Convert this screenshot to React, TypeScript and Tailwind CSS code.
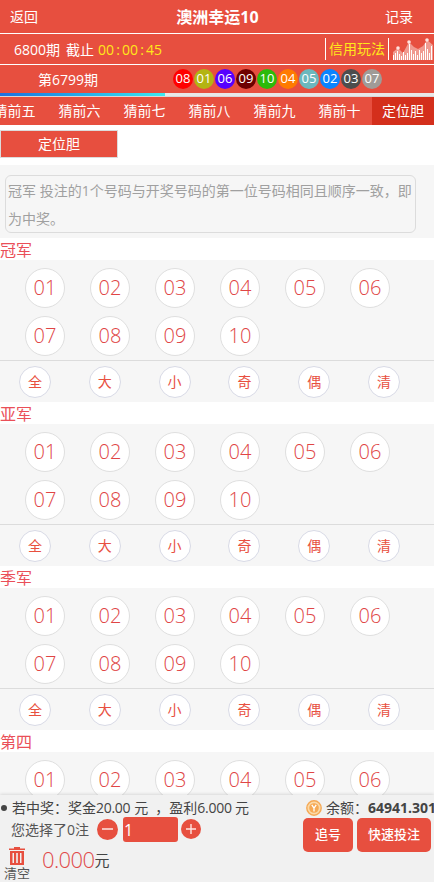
const BALLS = [
  { n: '08', c: 'bg-[#ff0000]' },
  { n: '01', c: 'bg-[#b3b412]' },
  { n: '06', c: 'bg-[#5500ff]' },
  { n: '09', c: 'bg-[#6e0000]' },
  { n: '10', c: 'bg-[#2cba0a]' },
  { n: '04', c: 'bg-[#ff7b00]' },
  { n: '05', c: 'bg-[#6cb8bd]' },
  { n: '02', c: 'bg-[#0a84ff]' },
  { n: '03', c: 'bg-[#4d4d4d]' },
  { n: '07', c: 'bg-[#a09b97]' },
];
const TABS = ['猜前五', '猜前六', '猜前七', '猜前八', '猜前九', '猜前十'];
const NUMS = ['01', '02', '03', '04', '05', '06', '07', '08', '09', '10'];
const QUICK = ['全', '大', '小', '奇', '偶', '清'];

const ChartIcon = () => (
  <svg width="41" height="22" viewBox="0 0 41 22" className="block">
    <path d="M1 22V14L6 10L11 15L17 4L22 9L26 11L31 8L35 2L41 7V22Z" fill="#f09a90" />
    {[1, 3, 5, 7, 9, 11, 13, 15, 17, 19, 21, 23, 25, 27, 29, 31, 33, 35, 37, 39].map((x, i) => (
      <rect key={x} x={x} y={[17, 15, 13, 16, 18, 14, 17, 15, 6, 12, 16, 13, 17, 12, 15, 13, 5, 11, 15, 8][i]} width="1" height="22" fill="#fff" />
    ))}
    <circle cx="6" cy="10" r="1.8" fill="#ffe3df" />
    <circle cx="17" cy="4" r="1.8" fill="#ffe3df" />
    <circle cx="35" cy="2" r="1.8" fill="#ffe3df" />
  </svg>
);

const CoinIcon = () => (
  <svg width="16" height="16" viewBox="0 0 16 16" className="block shrink-0">
    <circle cx="8" cy="8" r="7.2" fill="#fbd9a8" stroke="#f5a955" strokeWidth="1.4" />
    <circle cx="8" cy="8" r="4.8" fill="#f6a954" />
    <path d="M5.8 4.8L8 8L10.2 4.8M8 8V11.4" fill="none" stroke="#fff" strokeWidth="1.3" />
  </svg>
);

const Section = ({ title }: { title: string }) => (
  <div>
    <div className="h-[22px] leading-[24px] text-[16px] text-[#ea4f58]">{title}</div>
    <div className="bg-[#f6f6f6]">
      <div className="flex flex-wrap gap-x-[25px] gap-y-[8px] pl-[25px] pt-[8px] pb-[4px] h-[100px]">
        {NUMS.map(n => (
          <div key={n} className="w-[40px] h-[40px] rounded-full bg-white border border-[#dfdfdf] flex items-center justify-center text-[20px] font-light text-[#e04545]">{n}</div>
        ))}
      </div>
      <div className="h-[42px] border-t border-[#dcdcdc] flex items-center pl-[19px] gap-x-[37.8px]">
        {QUICK.map(q => (
          <div key={q} className="w-[32px] h-[32px] rounded-full bg-white border border-[#d8dae6] flex items-center justify-center text-[14px] text-[#e8503f]">{q}</div>
        ))}
      </div>
    </div>
  </div>
);

export default function App() {
  return (
    <div className="w-[434px] h-[882px] flex flex-col overflow-hidden bg-white font-['Open_Sans','Noto_Sans_CJK_SC',sans-serif] text-[14px]">
      {/* Header */}
      <div className="h-[33px] shrink-0 bg-[#e74f3f] text-white flex items-center justify-between pl-[10px] pr-[21px]">
        <span>返回</span>
        <span className="text-[16px] font-bold ml-[12px]">澳洲幸运10</span>
        <span>记录</span>
      </div>
      <div className="h-[31px] shrink-0 bg-[#e74f3f] border-t border-white text-white flex items-center">
        <span className="ml-[14px]">6800期</span>
        <span className="ml-[6px]">截止</span>
        <span className="ml-[4px] text-[#ffe81a] [word-spacing:-1.5px]">00 : 00 : 45</span>
        <span className="ml-[auto] h-[22px] border-l border-white pl-[3px] text-[#ffe81a] leading-[22px]">信用玩法</span>
        <div className="ml-[3px] h-[22px] border-l border-white pl-[3px] pr-[1px] flex items-end">
          <ChartIcon />
        </div>
      </div>
      <div className="h-[29px] shrink-0 bg-[#e74f3f] border-t border-white text-white flex items-center">
        <span className="ml-[38px] w-[135px]">第6799期</span>
        <div className="flex gap-x-px">
          {BALLS.map(b => (
            <span key={b.n} className={`w-[20px] h-[20px] rounded-full ${b.c} flex items-center justify-center text-[13px]`}>{b.n}</span>
          ))}
        </div>
      </div>
      {/* Progress */}
      <div className="h-[3px] shrink-0 bg-[#e8e8e8]">
        <div className="h-full w-[165px] bg-gradient-to-r from-[#1f6fe0] to-[#3fe8f0]" />
      </div>
      {/* Tabs */}
      <div className="h-[29px] shrink-0 bg-[#e74f3f] text-white flex justify-end overflow-hidden border-t border-[#d8d8d8]">
        {TABS.map(t => (
          <span key={t} className="w-[65px] shrink-0 text-center leading-[27px]">{t}</span>
        ))}
        <span className="w-[62px] shrink-0 text-center leading-[27px] bg-[#d42f1c]">定位胆</span>
      </div>

      {/* Content */}
      <div className="flex-1 min-h-0 overflow-hidden">
        <div className="pt-[5px] pb-[7px]">
          <div className="w-[118px] h-[28px] bg-[#e74f3f] border border-[#dcdcdc] text-white text-center leading-[26px]">定位胆</div>
        </div>
        <div className="bg-[#f6f6f6] h-[73px] pt-[10px] pl-[5px]">
          <div className="w-[411px] h-[58px] border border-[#dcdcdc] rounded-[6px] px-[2px] text-[#a0a0a0] text-[14px] leading-[28px] pt-px">
            冠军 投注的1个号码与开奖号码的第一位号码相同且顺序一致，即为中奖。
          </div>
        </div>
        <Section title="冠军" />
        <Section title="亚军" />
        <Section title="季军" />
        <Section title="第四" />
      </div>

      {/* Footer */}
      <div className="h-[87px] shrink-0 bg-[#f1f1f1] shadow-[0_-1px_3px_rgba(0,0,0,0.12)] flex text-[#444]">
        <div className="w-[300px]">
          <div className="h-[23px] mt-[1px] flex items-center whitespace-nowrap">
            <span className="ml-[1px] w-[6px] h-[6px] rounded-full bg-[#444]" />
            <span className="ml-[5px]">若中奖：奖金</span>
            <span className="tracking-[-0.3px]">20.00</span>
            <span className="ml-[4px]">元</span>
            <span className="ml-[7px]">，</span>
            <span>盈利</span>
            <span className="tracking-[-0.2px]">6.000</span>
            <span className="ml-[3px]">元</span>
          </div>
          <div className="h-[26px] -mt-[3px] flex items-center">
            <span className="ml-[11px] text-[#555]">您选择了0注</span>
            <span className="ml-[8px] w-[21px] h-[21px] rounded-full bg-[#e74f3f] flex items-center justify-center">
              <span className="block w-[11px] h-[1.5px] bg-[#f7c0ba]" />
            </span>
            <span className="ml-[5px] w-[55px] h-[25px] rounded-[3px] bg-[#e74f3f] text-white text-[16px] leading-[27px] pl-[1px]">1</span>
            <span className="ml-[3px] w-[20px] h-[20px] rounded-full bg-[#e74f3f] flex items-center justify-center">
              <svg width="12" height="12" viewBox="0 0 12 12"><path d="M6 1V11M1 6H11" stroke="#ffe5e2" strokeWidth="1.4" /></svg>
            </span>
          </div>
          <div className="flex mt-[5px]">
            <div className="ml-[5px] w-[24px] flex flex-col items-center">
              <svg width="16" height="18" viewBox="0 0 16 18" className="block">
                <path d="M5 0H11V1.5H16V3H0V1.5H5Z" fill="#e74f3f" />
                <path fillRule="evenodd" d="M1 4H15V18H1ZM3.5 6V16H5V6ZM7.2 6V16H8.8V6ZM11 6V16H12.5V6Z" fill="#e74f3f" />
              </svg>
              <span className="text-[13px] leading-[16px] whitespace-nowrap text-[#555]">清空</span>
            </div>
            <div className="ml-[13px] flex items-end h-[26px]">
              <span className="text-[#e04a4a] text-[22px] font-light tracking-[-0.6px] leading-[28px]">0.000</span>
              <span className="text-[15px] leading-[25px]">元</span>
            </div>
          </div>
        </div>
        <div className="flex-1 min-w-0">
          <div className="h-[23px] mt-[1px] flex items-center whitespace-nowrap overflow-hidden">
            <span className="ml-[6px]"><CoinIcon /></span>
            <span className="ml-[4px]">余额：</span>
            <span className="font-bold">64941.301</span>
          </div>
          <div className="flex gap-x-[4px] ml-[3px] -mt-[1px]">
            <div className="w-[50px] h-[34px] rounded-[5px] bg-[#e74f3f] text-white text-[13px] font-medium flex items-center justify-center">追号</div>
            <div className="w-[74px] h-[34px] rounded-[5px] bg-[#e74f3f] text-white text-[13px] font-medium flex items-center justify-center">快速投注</div>
          </div>
        </div>
      </div>
    </div>
  );
}
